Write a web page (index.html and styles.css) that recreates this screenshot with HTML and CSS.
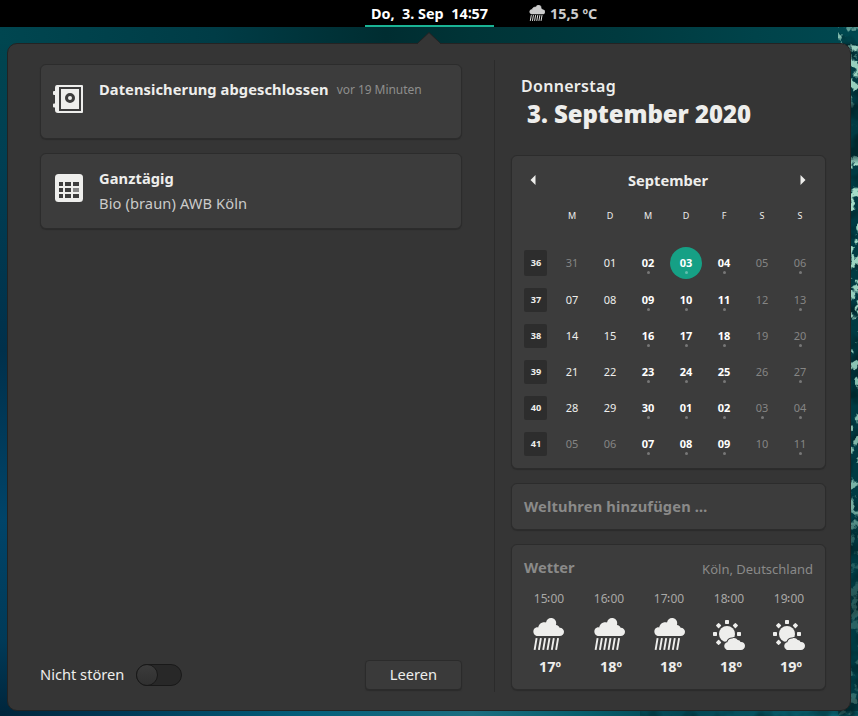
FILE: index.html
```html
<!DOCTYPE html>
<html lang="de">
<head>
<meta charset="utf-8">
<title>Kalender</title>
<link rel="stylesheet" href="styles.css">
</head>
<body>
<svg class="foam" width="858" height="689" viewBox="0 27 858 689" aria-hidden="true">
  <defs>
    <filter id="spray" x="0" y="0" width="100%" height="100%" color-interpolation-filters="sRGB">
      <feTurbulence type="fractalNoise" baseFrequency="0.1 0.09" numOctaves="4" seed="23"/>
      <feColorMatrix values="0 0 0 0 0.66  0 0 0 0 0.88  0 0 0 0 0.8  9 0 0 0 -4.9"/>
    </filter>
    <filter id="shade" x="0" y="0" width="100%" height="100%" color-interpolation-filters="sRGB">
      <feTurbulence type="fractalNoise" baseFrequency="0.04 0.05" numOctaves="3" seed="4"/>
      <feColorMatrix values="0 0 0 0 0  0 0 0 0 0.11  0 0 0 0 0.12  4 0 0 0 -1.8"/>
    </filter>
    <linearGradient id="fade" x1="0" x2="0" y1="0" y2="1">
      <stop offset="0" stop-color="#fff" stop-opacity=".5"/>
      <stop offset=".02" stop-color="#fff" stop-opacity=".9"/>
      <stop offset=".09" stop-color="#fff" stop-opacity=".9"/>
      <stop offset=".12" stop-color="#fff" stop-opacity=".05"/>
      <stop offset=".18" stop-color="#fff" stop-opacity=".05"/>
      <stop offset=".2" stop-color="#fff"/>
      <stop offset=".55" stop-color="#fff" stop-opacity=".8"/>
      <stop offset=".7" stop-color="#fff" stop-opacity=".7"/>
      <stop offset=".75" stop-color="#fff" stop-opacity=".2"/>
      <stop offset="1" stop-color="#fff" stop-opacity=".3"/>
    </linearGradient>
    <mask id="strip"><rect x="832" y="27" width="26" height="689" fill="url(#fade)"/></mask>
  </defs>
  <rect x="838" y="27" width="20" height="689" filter="url(#shade)" opacity=".6"/>
  <g mask="url(#strip)"><rect x="838" y="27" width="20" height="689" filter="url(#spray)"/></g>
  <rect x="640" y="711" width="218" height="5" filter="url(#shade)" opacity=".4"/>
</svg>

<svg class="defs" width="0" height="0" aria-hidden="true">
  <symbol id="rain" viewBox="0 0 32 32">
    <path d="M4.6 18A4.6 4.6 0 0 1 4.6 9.2C5.2 9.2 5.7 9.3 6.2 9.5C6.7 6.2 9.4 4 12.5 4.2C13 4.2 13.5 4.3 14 4.4C14.6 1.8 16.500 0 19 0C22 0 24.200 2.200 24.200 5C24.200 5.700 24.100 6.300 23.900 6.900C25.800 7.100 27.200 8.300 27.600 9.700C30 9.600 32 11.300 32 13.800C32 16.200 30.200 18 27.600 18Z"/>
    <path class="drops" d="M4.600 20.200L2.600 31.800M8.900 20.200L6.900 31.800M13.200 20.200L11.200 31.800M17.500 20.200L15.500 31.800M21.800 20.200L19.800 31.800M26.100 20.200L24.100 31.800"/>
  </symbol>
  <symbol id="sunny" viewBox="0 0 32 32">
    <g><rect x="12" y="2" width="4" height="4" rx=".7"/><rect x="-2" y="-2" width="4" height="4" rx=".7" transform="translate(5.600 7.600) rotate(45)"/><rect x="-2" y="-2" width="4" height="4" rx=".7" transform="translate(22.400 7.600) rotate(45)"/><rect x="-2" y="-2" width="4" height="4" rx=".7" transform="translate(5.600 24.400) rotate(45)"/><rect x="0" y="14" width="4" height="4" rx=".7"/><rect x="24" y="14" width="4" height="4" rx=".7"/></g>
    <circle cx="14" cy="16" r="8"/>
    <path class="cloud-edge" d="M13.800 32A4.200 4.200 0 0 1 13.800 24.200L14.400 24.200C14.800 21.900 17 20.300 19.300 20.500C21.200 19.400 23.800 20.400 24.600 22.100C26 22 27.100 22.800 27.500 24C29.900 23.700 32 25.200 32 27.800C32 30.300 30.200 32 28 32Z"/>
  </symbol>
</svg>

<header class="topbar">
  <div class="clock">Do,&nbsp; 3. Sep&nbsp; 14∶57</div>
  <div class="status"><svg class="status-icon"><use href="#rain"/></svg><span>15,5 ºC</span></div>
</header>

<main class="panel">
  <svg class="pointer" width="26" height="13" viewBox="0 0 26 13"><path class="pointer-fill" d="M1 13V12L13 0.500L25 12V13Z"/><path class="pointer-line" d="M1 11.800L13 .5L25 11.800"/></svg>

  <section class="messages">
    <article class="card note backup">
      <svg class="note-icon" viewBox="0 0 32 32">
        <path fill-rule="evenodd" d="M5 2H30Q31 2 31 3V29Q31 30 30 30H6Q3 30 3 27V24.500H2Q1 24.500 1 23.500V21.500Q1 20.500 2 20.500H3V12H2Q1 12 1 11V9Q1 8 2 8H3V5Q3 2 5 2ZM7 4V28H29V4ZM9 6H27V26H9Z"/>
        <circle class="dial" cx="18" cy="15" r="3.500"/>
      </svg>
      <div class="note-text"><h3>Datensicherung abgeschlossen</h3><time>vor 19 Minuten</time></div>
    </article>
    <article class="card note event">
      <svg class="note-icon" viewBox="0 0 32 32">
        <rect x="3" y="2" width="28" height="28" rx="3.500"/>
        <path class="cells" d="M7 10h4v4h-4zM13 10h6v4h-6zM21 10h6v4h-6zM7 16h4v4h-4zM13 16h6v4h-6zM7 22h4v4h-4zM13 22h6v4h-6zM21 22h6v4h-6z"/>
        <path class="cell-dim" d="M21 16h6v4h-6z"/>
      </svg>
      <div class="note-text"><h3>Ganztägig</h3><p>Bio (braun) AWB Köln</p></div>
    </article>
    <footer class="controls">
      <span class="dnd">Nicht stören</span>
      <span class="switch"><i></i></span>
      <button class="clear">Leeren</button>
    </footer>
  </section>

  <aside class="side">
    <div class="today"><div class="weekday">Donnerstag</div><div class="date">3. September 2020</div></div>

    <section class="card calendar">
      <div class="month">
        <svg width="6" height="10" viewBox="0 0 6 10"><path d="M5.500 0V10L.5 5Z"/></svg>
        <h2>September</h2>
        <svg width="6" height="10" viewBox="0 0 6 10"><path d="M.5 0V10L5.500 5Z"/></svg>
      </div>
      <div class="row head"><b></b><span>M</span><span>D</span><span>M</span><span>D</span><span>F</span><span>S</span><span>S</span></div>
      <div class="row first"><b>36</b><span class="dim">31</span><span>01</span><span class="busy">02</span><span class="busy now">03</span><span class="busy">04</span><span class="dim">05</span><span class="dim dot">06</span></div>
      <div class="row"><b>37</b><span>07</span><span>08</span><span class="busy">09</span><span class="busy">10</span><span class="busy">11</span><span class="dim">12</span><span class="dim dot">13</span></div>
      <div class="row"><b>38</b><span>14</span><span>15</span><span class="busy">16</span><span class="busy">17</span><span class="busy">18</span><span class="dim">19</span><span class="dim dot">20</span></div>
      <div class="row"><b>39</b><span>21</span><span>22</span><span class="busy">23</span><span class="busy">24</span><span class="busy">25</span><span class="dim">26</span><span class="dim dot">27</span></div>
      <div class="row"><b>40</b><span>28</span><span>29</span><span class="busy">30</span><span class="busy">01</span><span class="busy">02</span><span class="dim dot">03</span><span class="dim dot">04</span></div>
      <div class="row"><b>41</b><span class="dim">05</span><span class="dim">06</span><span class="busy">07</span><span class="busy">08</span><span class="busy">09</span><span class="dim">10</span><span class="dim dot">11</span></div>
    </section>

    <section class="card clocks">Weltuhren hinzufügen …</section>

    <section class="card weather">
      <div class="weather-head"><h2>Wetter</h2><span>Köln, Deutschland</span></div>
      <div class="hours">
        <div class="hour"><span>15∶00</span><svg><use href="#rain"/></svg><b>17º</b></div>
        <div class="hour"><span>16∶00</span><svg><use href="#rain"/></svg><b>18º</b></div>
        <div class="hour"><span>17∶00</span><svg><use href="#rain"/></svg><b>18º</b></div>
        <div class="hour"><span>18∶00</span><svg><use href="#sunny"/></svg><b>18º</b></div>
        <div class="hour"><span>19∶00</span><svg><use href="#sunny"/></svg><b>19º</b></div>
      </div>
    </section>
  </aside>
</main>
</body>
</html>
```
FILE: styles.css
```css
* { box-sizing: border-box; margin: 0; padding: 0; }

body {
  width: 858px;
  height: 716px;
  overflow: hidden;
  position: relative;
  font: 14.67px/20px "Noto Sans", sans-serif;
  color: #eeeeec;
  background:
    linear-gradient(90deg, #00253b, #003956 14%, #045e7a 35%, #1c6e80 55%, #075e6c 68%, #034552 80%, #0b6675) 0 711px / 100% 5px no-repeat,
    linear-gradient(90deg, #004650, #003c46 25%, #002d31 45%, #003437 55%, #003a3f 72%, #00434a 88%, #004850) 0 27px / 100% 17px no-repeat,
    linear-gradient(90deg, transparent 50%, #003a42 50%),
    linear-gradient(#00464f 27px, #003f53 160px, #00304b 350px, #004469 520px, #003a58 640px, #00253b);
}

.foam { position: absolute; left: 0; top: 27px; }
.defs { position: absolute; }
svg { display: block; fill: #eeeeec; }

.topbar {
  position: relative;
  height: 27px;
  display: flex;
  padding-left: 365px;
  background: #000;
  font-size: 14.4px;
  font-weight: 700;
}
.clock {
  width: 129px;
  height: 27px;
  border-bottom: 2px solid #1ab394;
  line-height: 27px;
  text-align: center;
  white-space: nowrap;
  color: #fff;
}
.status { display: flex; margin-left: 35px; line-height: 27px; color: #ccc; }
.status-icon { width: 16px; height: 16px; margin: 5px 5px 0 0; fill: #ccc; stroke: #ccc; }
.drops { fill: none; stroke: #eeeeec; stroke-width: 1.9; }
.status-icon .drops { stroke: #ccc; }

.panel {
  position: relative;
  width: 844px;
  height: 668px;
  margin: 16px 0 0 7px;
  border: 1px solid #232323;
  border-radius: 10px;
  background: #353535;
  display: flex;
}
.pointer { position: absolute; left: 408px; top: -12px; }
.pointer-fill { fill: #353535; }
.pointer-line { fill: none; stroke: #232323; }

.card {
  border: 1px solid #2c2c2c;
  border-radius: 6px;
  background: #3c3c3c;
  box-shadow: 0 1px 1px #2b2b2b;
}

.messages {
  width: 486px;
  padding: 20px 32px 20px;
  display: flex;
  flex-direction: column;
}
.note { width: 422px; display: flex; padding: 14px 0 0 11px; }
.backup { height: 75px; margin-bottom: 14px; }
.event { height: 76px; }
.note-icon { width: 32px; height: 32px; margin: 4px 15px 0 0; }
.dial { fill: #eeeeec; stroke: #3c3c3c; stroke-width: 3; }
.cells { fill: #3c3c3c; }
.cell-dim { fill: #858585; }
.note-text h3 { font-size: 14.67px; font-weight: 700; letter-spacing: .08px; }
.note-text p { margin-top: 5px; letter-spacing: .1px; color: #cbcbca; }
.backup .note-text { display: flex; gap: 8px; }
.note-text time { font-size: 12px; line-height: 21px; letter-spacing: -.05px; color: #8e8e8c; }

.controls { display: flex; align-items: center; margin-top: auto; height: 30px; width: 422px; }
.dnd { margin-top: -2px; }
.switch {
  width: 46px;
  height: 22px;
  margin-left: 12px;
  border: 1px solid #191919;
  border-radius: 11px;
  background: #282828;
}
.switch i {
  display: block;
  width: 22px;
  height: 22px;
  margin: -1px;
  border: 1px solid #191919;
  border-radius: 50%;
  background: linear-gradient(#3b3b3b, #303030);
}
.clear {
  width: 97px;
  height: 30px;
  margin-left: auto;
  padding-bottom: 2px;
  border: 1px solid #2b2b2b;
  border-radius: 4px;
  background: #3a3a3a;
  box-shadow: 0 1px 1px #2b2b2b;
  color: #eeeeec;
  font: inherit;
}

.side {
  position: relative;
  width: 332px;
  padding: 31px 0 0 17px;
}
.side::before {
  content: "";
  position: absolute;
  left: 0;
  top: 16px;
  width: 1px;
  height: 632px;
  background: #2b2b2b;
}
.today { height: 80px; padding-left: 10px; white-space: nowrap; }
.weekday { font-size: 16px; font-weight: 600; line-height: 22px; letter-spacing: .3px; }
.date { margin-left: 6px; font-size: 24px; font-weight: 900; line-height: 34px; letter-spacing: -.08px; }

.calendar { height: 314px; margin-bottom: 14px; padding: 11px 0 0 12px; }
.month { display: flex; justify-content: space-between; align-items: center; height: 26px; margin-bottom: 1px; padding: 0 19px 0 6px; }
h2 { font-size: 14.67px; font-weight: 700; }
.row { display: grid; grid-template-columns: 29px repeat(7, 38px); height: 36px; align-items: center; font-size: 11px; line-height: 16px; text-align: center; }
.row b { width: 23px; height: 24px; padding-left: 1px; border-radius: 2px; background: #2d2d2d; font-size: 9.2px; line-height: 24px; }
.row span { position: relative; }
.head { height: 50px; font-size: 9px; padding-bottom: 6px; }
.head b { background: none; }
.first { height: 38px; }
.first b { height: 26px; line-height: 26px; }
.dim { color: #858584; }
.busy { font-weight: 700; color: #fff; }
.busy::after, .dot::after {
  content: "";
  position: absolute;
  left: 50%;
  bottom: -3px;
  width: 3px;
  height: 3px;
  margin-left: -1px;
  border-radius: 50%;
  background: #777;
}
.row .now { width: 32px; height: 32px; margin: 0 3px; border-radius: 50%; background: #16a085; line-height: 32px; }
.now::after { bottom: 5px; background: #62bfae; }

.clocks { height: 47px; margin-bottom: 14px; padding: 0 12px; line-height: 45px; font-weight: 700; letter-spacing: .16px; color: #8a8a89; }
.weather { height: 146px; padding: 12px; }
.weather-head { display: flex; justify-content: space-between; color: #8a8a89; }
.weather-head span { font-size: 13px; line-height: 24px; }
.hours { display: flex; margin: 8px -7px 0 -5px; }
.hour { flex: none; width: 60px; display: flex; flex-direction: column; align-items: center; }
.hour span { font-size: 12px; line-height: 20px; color: #a9a9a7; }
.hour svg { width: 32px; height: 32px; margin-top: 9px; }
.hour b { font-size: 14.4px; line-height: 20px; margin: 7px 0 0 4px; }
.hour:first-child svg { margin-right: 2px; }
.hour:first-child b { margin-left: 2px; }
.cloud-edge { stroke: #3c3c3c; stroke-width: 2; paint-order: stroke; }
```
